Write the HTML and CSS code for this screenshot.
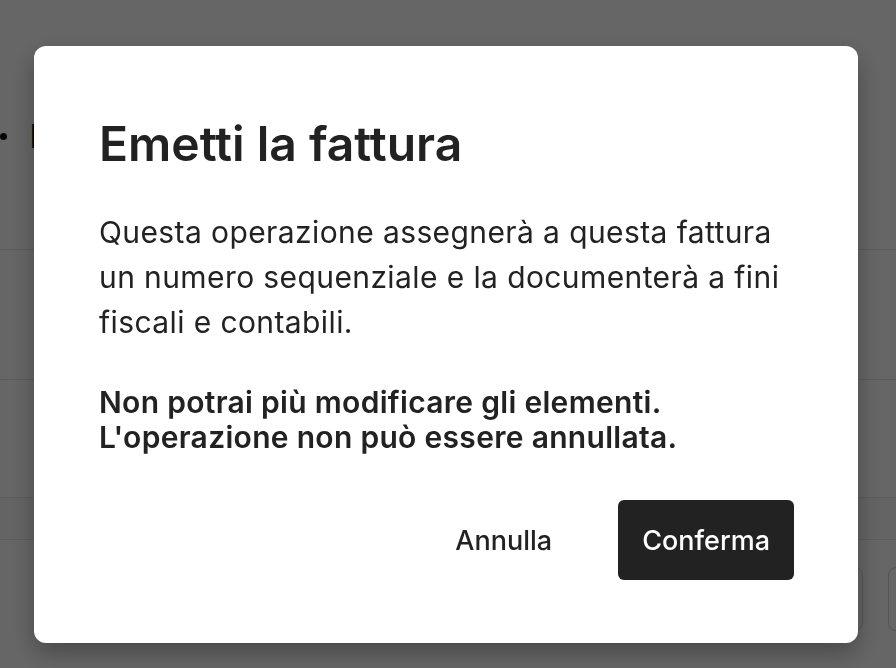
FILE: index.html
```html
<!DOCTYPE html>
<html lang="it">
<head>
<meta charset="utf-8">
<title>Emetti la fattura</title>
<link rel="stylesheet" href="styles.css">
</head>
<body>
<div class="page">
  <header class="page-head">
    <span class="dot"></span>
    <span class="page-title">Fattura</span>
  </header>
  <div class="row row-a"></div>
  <div class="row row-b"></div>
  <div class="row row-c"></div>
  <div class="row row-total"></div>
  <footer class="page-foot">
    <span class="ghost-btn"></span>
    <span class="ghost-btn"></span>
  </footer>
</div>

<div class="overlay">
  <div class="dialog" role="dialog" aria-labelledby="dlg-title">
    <h1 class="dialog-title" id="dlg-title">Emetti la fattura</h1>
    <p class="dialog-text">Questa operazione assegnerà a questa fattura un numero sequenziale e la documenterà a fini fiscali e contabili.</p>
    <p class="dialog-warning">Non potrai più modificare gli elementi.<br>L'operazione non può essere annullata.</p>
    <div class="dialog-actions">
      <button class="btn btn-ghost">Annulla</button>
      <button class="btn btn-primary">Conferma</button>
    </div>
  </div>
</div>
</body>
</html>
```
FILE: styles.css
```css
* { box-sizing: border-box; }
html, body { margin: 0; padding: 0; }
body {
  width: 896px;
  height: 668px;
  overflow: hidden;
  background: #ffffff;
  font-family: Inter, "Noto Sans", sans-serif;
  font-variant-ligatures: none;
  color: #222222;
}

/* background page */
.page {
  width: 896px;
  height: 668px;
  overflow: hidden;
  display: flex;
  flex-direction: column;
}
.page-head {
  flex: none;
  height: 250px;
  display: flex;
  align-items: flex-start;
  padding-top: 121px;
  gap: 23px;
  border-bottom: 1px solid #e4e4e4;
}
.dot {
  width: 7px;
  height: 7px;
  border-radius: 50%;
  background: #111;
  margin-top: 12px;
}
.page-title {
  font-size: 32px;
  font-weight: 700;
  line-height: 32px;
  color: #111;
}
.row { flex: none; border-bottom: 1px solid #e4e4e4; }
.row-a { height: 130px; }
.row-b { height: 118px; }
.row-c { height: 42px; background: #fafafa; }
.row-total { height: 27px; border-bottom: none; }
.page-foot {
  flex: none;
  display: flex;
  justify-content: flex-end;
  gap: 25px;
  margin-right: -48px;
}
.ghost-btn {
  flex: none;
  width: 56px;
  height: 64px;
  border: 1px solid #d2d2d2;
  border-radius: 8px;
}

/* overlay and dialog */
.overlay {
  position: fixed;
  inset: 0;
  background: rgba(0, 0, 0, 0.6);
  display: flex;
  justify-content: center;
  align-items: flex-start;
  padding-top: 46px;
}
.dialog {
  width: 824px;
  height: 597px;
  margin-left: -4px;
  background: #ffffff;
  border-radius: 12px;
  box-shadow: 0 10px 24px rgba(0, 0, 0, 0.3);
  padding: 69px 64px 63px 65px;
  display: flex;
  flex-direction: column;
}
.dialog-title {
  margin: 0;
  font-size: 48px;
  font-weight: 600;
  line-height: 58px;
  color: #222;
}
.dialog-text {
  margin: 37px 0 0;
  font-size: 30px;
  letter-spacing: 0.4px;
  line-height: 45px;
  color: #222;
}
.dialog-warning {
  margin: 40px 0 0;
  font-size: 30px;
  font-weight: 600;
  letter-spacing: 0.3px;
  line-height: 35px;
  color: #222;
}
.dialog-actions {
  margin-top: auto;
  display: flex;
  justify-content: flex-end;
  align-items: center;
  gap: 42px;
}
.btn {
  font-family: inherit;
  font-size: 27px;
  font-weight: 500;
  height: 80px;
  border: none;
  border-radius: 6px;
  padding: 0 24px;
  cursor: pointer;
}
.btn-ghost {
  background: transparent;
  color: #222;
}
.btn-primary {
  background: #222222;
  color: #ffffff;
}
```
